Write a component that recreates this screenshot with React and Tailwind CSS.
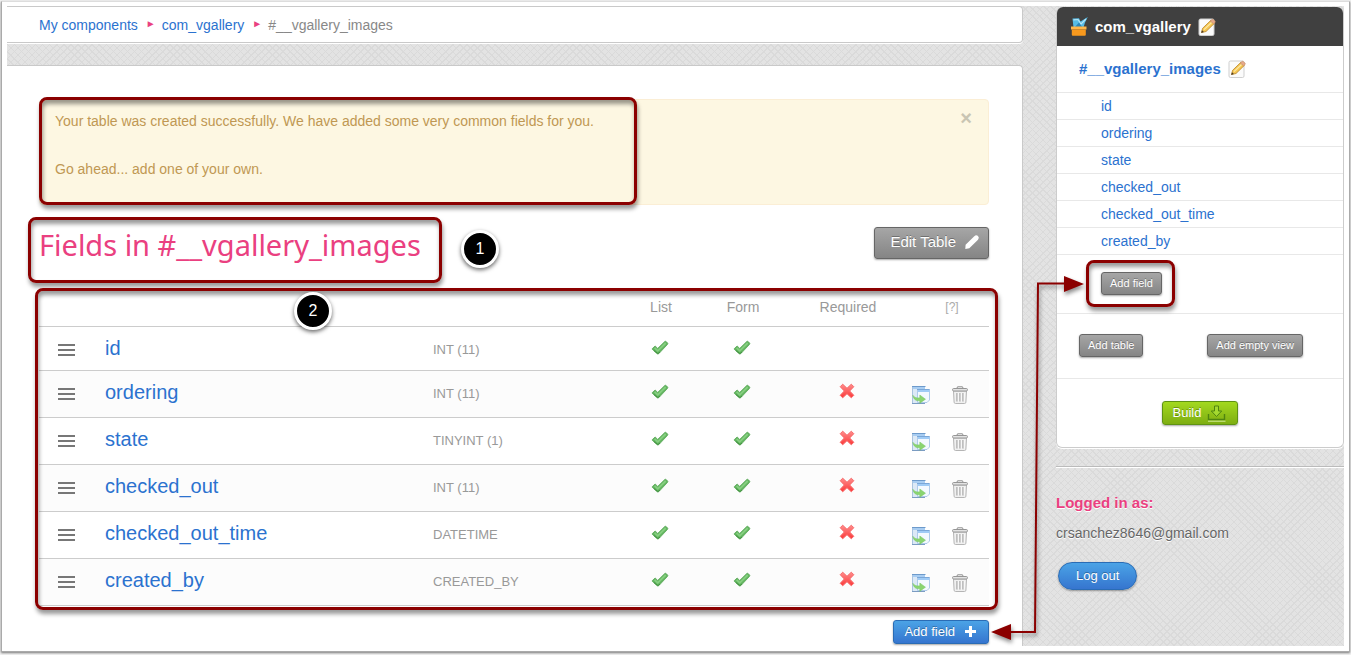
import { useState } from 'react';
import clsx from 'clsx';

const FIELDS = [
  { name: 'id', type: 'INT (11)', locked: true },
  { name: 'ordering', type: 'INT (11)' },
  { name: 'state', type: 'TINYINT (1)' },
  { name: 'checked_out', type: 'INT (11)' },
  { name: 'checked_out_time', type: 'DATETIME' },
  { name: 'created_by', type: 'CREATED_BY' },
];

const GRAY = 'border-[#666] bg-linear-to-b from-[#a6a6a6] to-[#858585]';
const BLUE = 'border-[#2a6cb5] bg-linear-to-b from-[#4ba3e6] to-[#3675cf]';
const GREEN = 'border-[#5f9314] bg-linear-to-b from-[#a3d91f] to-[#7eae12]';

function Button({ className, children, ...props }) {
  return (
    <button
      type="button"
      className={clsx(
        'flex items-center border text-white cursor-pointer shadow-[0_1px_2px_rgba(0,0,0,0.35)] [text-shadow:0_-1px_0_rgba(0,0,0,0.3)]',
        className
      )}
      {...props}
    >
      {children}
    </button>
  );
}

function Check() {
  return (
    <svg viewBox="0 0 18 16" className="w-[18px] h-4 inline-block" aria-hidden="true">
      <path
        d="M1.2 8.7 4.1 6 6.7 8.4 13.8 1.5q.7-.5 1.3 0l1.500 1.600q.5.600 0 1.200L7.900 13.600q-1 .9-2 0L1.200 9.200Z"
        fill="#62b55f"
        stroke="#58a656"
        strokeWidth="0.8"
        strokeLinejoin="round"
      />
      <path d="M3.6 7.9 6.8 10.8 14.7 3" fill="none" stroke="#86cf80" strokeWidth="1.8" />
      <path d="M3 10.6 6.9 13.6 9 12" fill="none" stroke="#3f8f3e" strokeWidth="0.9" />
    </svg>
  );
}

function Cross() {
  return (
    <svg viewBox="0 0 16 16" className="w-4 h-4 inline-block" aria-hidden="true">
      <defs>
        <linearGradient id="cross" x1="0" y1="0" x2="0" y2="1">
          <stop offset="0" stopColor="#ff8d8d" />
          <stop offset="1" stopColor="#fb3838" />
        </linearGradient>
      </defs>
      <path
        d="M3.7 1.2 8 5.3l4.3-4.1 2.5 2.5L10.7 8l4.1 4.3-2.5 2.5L8 10.7l-4.3 4.1-2.5-2.5L5.3 8 1.2 3.7Z"
        fill="url(#cross)"
        stroke="#f76a6a"
        strokeWidth="1"
        strokeLinejoin="round"
      />
    </svg>
  );
}

function CopyIcon() {
  return (
    <svg viewBox="0 0 18 18" className="w-[18px] h-[18px]" aria-hidden="true">
      <path d="M.5.5h12.5v16.5H.5Z" fill="#dce9f6" />
      <path d="M.5 1v16" stroke="#a9c3df" />
      <path d="M0 .5h13.5" stroke="#6d9acb" />
      <path d="M1 1h12v2H1Z" fill="#a8cdf2" />
      <path d="M5.5 3.5h12v10.5l-2.5 2.5H5.5Z" fill="#f3f9ff" stroke="#a7c5e6" strokeWidth="0.9" />
      <path d="M5 3.5h12.5" stroke="#7aa7d8" />
      <path d="M6 4h11.5v2H6Z" fill="#9fcbf6" />
      <path d="M0 17.5h13" stroke="#7b9cc2" />
      <path
        d="M.8 9.2c1.5 2.6 4 3 7 2.5V9l5.7 4.2-5.7 4v-2.5C4.4 15.2 1.5 13.6.8 9.2Z"
        fill="#8ad471"
        stroke="#79c763"
        strokeWidth="0.5"
      />
    </svg>
  );
}

function TrashIcon() {
  return (
    <svg viewBox="0 0 16 18" className="w-4 h-[18px]" aria-hidden="true">
      <path d="M1.5 5h13l-.6 11.2q-.1 1.3-1.4 1.3h-9q-1.3 0-1.4-1.3Z" fill="#f0f0f0" stroke="#b5b5b5" />
      <path d="M4.8 2.5 5.5.8h5l.7 1.7" fill="none" stroke="#8f8f8f" />
      <rect x="0.5" y="2.5" width="15" height="2.5" rx="1.2" fill="#e3e3e3" stroke="#969696" />
      <path d="M5 7v8.5M8 7v8.5M11 7v8.5" stroke="#a5a5a5" strokeWidth="1.3" />
      <path d="M6.2 7v8.5M9.2 7v8.5M12.2 7v8.5" stroke="#fff" strokeWidth="0.8" />
    </svg>
  );
}

function NoteIcon() {
  return (
    <svg viewBox="0 0 18 18" className="w-[18px] h-[18px]" aria-hidden="true">
      <rect x="1" y="1" width="15" height="16.5" rx="1.5" fill="#fbfbfb" stroke="#cfcfcf" />
      <path d="M3.5 14.5 4.6 10.3 12.9 2.3 16.3 5.4 8 13.5Z" fill="#f5c651" stroke="#c08f35" strokeWidth="0.9" />
      <path d="M6 11.6 14.4 3.7" stroke="#fde9a4" strokeWidth="1.3" />
      <path d="M12.1 3 13.9 1.6q.8-.6 1.6.1l1.5 1.4q.7.8 0 1.5l-1.3 1.3Z" fill="#e6a889" stroke="#c08860" strokeWidth="0.6" />
      <path d="M3.2 15 4 12.2 5.9 14Z" fill="#4a3a2a" />
    </svg>
  );
}

function ComponentIcon() {
  return (
    <svg viewBox="0 0 17 19" className="w-[17px] h-[19px]" aria-hidden="true">
      <path d="M1.5 1.5 8 1.2 9.5 4.5 16.8 0 14 5.5 12.5 10.5H2.5Z" fill="#55bbe6" />
      <path d="M2.5 2.8 7 2.5 10 7 15 2" fill="none" stroke="#b4e5f8" strokeWidth="1.2" />
      <path d="M3.5 10.5 8 5.5l3.5 5Z" fill="#2a86bb" />
      <path d="M0 9.5h15.5v3H0Z" fill="#ffb64a" />
      <path d="M.8 12.5h14v5.2q0 1-1 1h-12q-1 0-1-1Z" fill="#f8991d" />
    </svg>
  );
}

function PencilIcon() {
  return (
    <svg viewBox="0 0 16 16" className="w-4 h-4" aria-hidden="true">
      <path d="M1.3 14.9 1.6 10.8 10.3 2.2q2-1.7 3.7-.1t0 3.7L5.3 14.3Z" fill="#fff" />
    </svg>
  );
}

function BuildIcon() {
  return (
    <svg viewBox="0 0 20 17" className="w-5 h-[17px]" aria-hidden="true">
      <path d="M1.5 9v5.5h16V9" fill="none" stroke="#4f8510" strokeWidth="1.4" />
      <path d="M1 16.2h17.5" stroke="#d5ee9c" />
      <path d="M7.5 1h4v5h3.2L9.5 11.5 4.3 6h3.2Z" fill="#a4d930" stroke="#4f8510" />
    </svg>
  );
}

function Highlight({ className }) {
  return (
    <div
      className={clsx(
        'absolute z-10 pointer-events-none border-3 border-[#8b0000] rounded-lg shadow-[1px_4px_4px_rgba(0,0,0,0.4),inset_1px_4px_4px_rgba(0,0,0,0.4)]',
        className
      )}
    />
  );
}

function Step({ number, className }) {
  return (
    <span
      className={clsx(
        'absolute z-20 flex items-center justify-center w-[38px] h-[38px] rounded-full border-3 border-white bg-black text-white text-base shadow-[0_2px_4px_rgba(0,0,0,0.6)]',
        className
      )}
    >
      {number}
    </span>
  );
}

function Breadcrumb() {
  return (
    <nav className="flex items-center gap-2 h-[37px] pl-8 bg-white border-y border-r border-[#c9c9c9] rounded-r text-sm shadow-[0_1px_0_#fff]">
      <a href="#components" className="text-[#2b72cf]">My components</a>
      <span className="w-2 text-[10px] text-[#ea4080]">►</span>
      <a href="#vgallery" className="text-[#2b72cf]">com_vgallery</a>
      <span className="w-2 text-[10px] text-[#ea4080]">►</span>
      <span className="text-[#888]">#__vgallery_images</span>
    </nav>
  );
}

function FieldsTable() {
  return (
    <div className="relative mt-[23px]">
      <table className="w-full table-fixed border-collapse text-sm text-[#999]">
        <colgroup>
          <col className="w-[66px]" />
          <col />
          <col className="w-[186px]" />
          <col className="w-[82px]" />
          <col className="w-[82px]" />
          <col className="w-32" />
          <col className="w-[78px]" />
        </colgroup>
        <thead>
          <tr className="h-10 border-b border-[#ccc]">
            <th aria-label="Order" />
            <th aria-label="Name" />
            <th aria-label="Type" />
            <th className="font-normal pt-0.5 pl-0.5">List</th>
            <th className="font-normal pt-0.5 pl-0.5">Form</th>
            <th className="font-normal pt-0.5 pl-0.5">Required</th>
            <th className="font-normal pt-0.5 pl-1 text-xs text-[#aaa]">[?]</th>
          </tr>
        </thead>
        <tbody>
          {FIELDS.map((field) => (
            <tr
              key={field.name}
              className={clsx(
                'border-b border-[#ccc] even:bg-[#fcfcfc] align-top',
                field.locked ? 'h-11' : 'h-[47px]'
              )}
            >
              <td className="pt-[17px] pl-[19px]">
                <div className="flex flex-col gap-[3px] w-[17px]">
                  <span className="h-0.5 bg-[#777]" />
                  <span className="h-0.5 bg-[#777]" />
                  <span className="h-0.5 bg-[#777]" />
                </div>
              </td>
              <td className="pt-[9px] text-xl leading-6">
                <a href={`#${field.name}`} className="text-[#2b72cf]">{field.name}</a>
              </td>
              <td className="pt-3.5 text-[13px]">{field.type}</td>
              <td className="pt-2.5 text-center"><Check /></td>
              <td className="pt-2.5 text-center"><Check /></td>
              <td className="pt-[9px] text-center">{!field.locked && <Cross />}</td>
              <td className="pt-[15px]">
                {!field.locked && (
                  <div className="flex gap-[22px] pl-px">
                    <button type="button" aria-label={`Copy ${field.name}`}><CopyIcon /></button>
                    <button type="button" aria-label={`Delete ${field.name}`}><TrashIcon /></button>
                  </div>
                )}
              </td>
            </tr>
          ))}
        </tbody>
      </table>
      <Highlight className="-left-1 -right-[9px] top-0.5 -bottom-1" />
      <Step number={2} className="left-[255px] top-1.5" />
    </div>
  );
}

function Sidebar() {
  return (
    <aside className="w-72 shrink-0 pt-px">
      <div className="border border-[#ccc] border-t-0 rounded-md bg-white shadow-[0_1px_0_#fff]">
        <div className="flex items-center gap-[7px] h-[39px] pl-3.5 rounded-t-md bg-[#404040] text-white text-[15px] font-bold">
          <ComponentIcon />
          <span>com_vgallery</span>
          <button type="button" aria-label="Edit component"><NoteIcon /></button>
        </div>
        <div className="flex items-center gap-[7px] h-[46px] pl-[22px] text-[15px] font-bold">
          <a href="#images" className="text-[#2b72cf]">#__vgallery_images</a>
          <button type="button" aria-label="Edit table"><NoteIcon /></button>
        </div>
        <ul className="text-sm">
          {FIELDS.map(({ name }) => (
            <li key={name} className="flex items-center h-[27px] pl-11 border-t border-[#e8e8e8]">
              <a href={`#${name}`} className="text-[#2b72cf]">{name}</a>
            </li>
          ))}
        </ul>
        <div className="border-t border-[#e8e8e8] pt-[17px] pb-[18px] pl-11">
          <div className="relative w-fit">
            <Button className={clsx('h-[23px] px-2 pb-px rounded-[3px] text-[11px]', GRAY)}>Add field</Button>
            <Highlight className="-left-[15px] -right-[13px] -inset-y-3" />
          </div>
        </div>
        <div className="flex justify-between border-t border-[#e8e8e8] pt-5 pb-[21px] pl-[22px] pr-10">
          <Button className={clsx('h-[23px] px-2 pb-px rounded-[3px] text-[11px]', GRAY)}>Add table</Button>
          <Button className={clsx('h-[23px] px-2 pb-px rounded-[3px] text-[11px]', GRAY)}>Add empty view</Button>
        </div>
        <div className="flex justify-center border-t border-[#e8e8e8] pt-[22px] pb-[22px]">
          <Button className={clsx('h-6 gap-1.5 px-2.5 rounded-[3px] text-[13px]', GREEN)}>
            Build
            <BuildIcon />
          </Button>
        </div>
      </div>
      <div className="mt-[18px] border-t border-[#bbb] shadow-[inset_0_1px_0_#fff] pt-6 text-sm [text-shadow:0_1px_0_#fff]">
        <p className="text-[15px] font-bold leading-6 text-[#ea4080]">Logged in as:</p>
        <p className="mt-1.5 leading-6 text-[#666]">crsanchez8646@gmail.com</p>
        <Button className={clsx('mt-[17px] ml-0.5 h-7 px-[17px] rounded-full text-[13px]', BLUE)}>Log out</Button>
      </div>
    </aside>
  );
}

function Connector() {
  return (
    <svg
      viewBox="0 0 96 370"
      className="absolute z-30 right-[258px] top-[270px] w-24 h-[370px] pointer-events-none drop-shadow-[1px_3px_2px_rgba(0,0,0,0.45)]"
      aria-hidden="true"
    >
      <path d="M75 7.5H48L45 356H20" fill="none" stroke="#8b0000" strokeWidth="2" />
      <path d="M74 0v16l20-8Z" fill="#8b0000" />
      <path d="M21 348v16l-20-8Z" fill="#8b0000" />
    </svg>
  );
}

export default function App() {
  const [alertOpen, setAlertOpen] = useState(true);

  return (
    <div className="min-h-screen bg-[#f2f2f2] px-px pt-px pb-[3px] font-['Liberation_Sans',Arial,sans-serif] leading-5">
      <div className="border border-[#aaa] border-t-[#ddd] bg-white px-[5px] pt-1 pb-[5px] shadow-[0_1px_2px_rgba(0,0,0,0.5)]">
        <div className="relative flex gap-[33px] bg-[#e3e3e3] bg-[repeating-linear-gradient(45deg,#dadada_0_1px,transparent_1px_5px),repeating-linear-gradient(-45deg,#dadada_0_1px,transparent_1px_5px)]">
          <div className="flex-1 min-w-0 flex flex-col">
            <Breadcrumb />
            <main className="grow mt-[22px] pt-[33px] pl-8 pr-[33px] pb-0.5 bg-white border-t border-r border-[#c9c9c9] rounded-tr">
              {alertOpen && (
                <div className="relative flex justify-between items-start pt-[9px] pb-[23px] pl-[15px] pr-4 border border-[#fbeed5] rounded bg-[#fdf7e2] text-sm leading-6 text-[#c09853]">
                  <div>
                    <p className="mb-6">
                      Your table was created successfully. We have added some very common fields for you.
                    </p>
                    <p>Go ahead... add one of your own.</p>
                  </div>
                  <button
                    type="button"
                    aria-label="Close"
                    className="text-xl leading-[18px] font-bold text-[#c9c5b3] cursor-pointer"
                    onClick={() => setAlertOpen(false)}
                  >
                    ×
                  </button>
                  <Highlight className="-left-px -top-[3px] -bottom-px w-[598px]" />
                </div>
              )}
              <div className="flex justify-between items-start mt-[22px]">
                <div className="relative">
                  <h1 className="font-['Noto_Sans',sans-serif] text-[29px] leading-9 text-[#ea4080]">
                    Fields in #__vgallery_images
                  </h1>
                  <Highlight className="-left-[11px] -right-[21px] -top-2.5 -bottom-5" />
                  <Step number={1} className="-right-[78px] top-[3px]" />
                </div>
                <Button className={clsx('h-8 gap-2 pl-[15px] pr-2 pb-0.5 rounded-[3px] text-[15px]', GRAY)}>
                  Edit Table
                  <PencilIcon />
                </Button>
              </div>
              <FieldsTable />
              <div className="flex justify-end mt-3.5">
                <Button className={clsx('h-6 gap-2.5 pl-2.5 pr-3 rounded-[3px] text-[13px]', BLUE)}>
                  Add field
                  <svg viewBox="0 0 11 11" className="w-[11px] h-[11px]" aria-hidden="true">
                    <path d="M5.5 0v11M0 5.5h11" stroke="#fff" strokeWidth="3" />
                  </svg>
                </Button>
              </div>
            </main>
          </div>
          <Sidebar />
          <Connector />
        </div>
      </div>
    </div>
  );
}
